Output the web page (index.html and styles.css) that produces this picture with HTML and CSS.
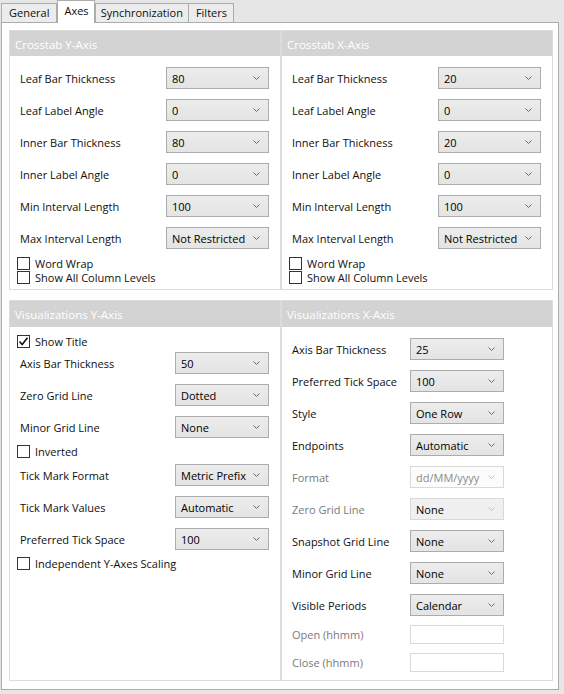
FILE: index.html
```html
<!DOCTYPE html>
<html>
<head>
<meta charset="utf-8">
<link rel="stylesheet" href="styles.css">
</head>
<body>
<div class="window">
  <div class="tabs">
    <div class="tab">General</div>
    <div class="tab active">Axes</div>
    <div class="tab">Synchronization</div>
    <div class="tab">Filters</div>
  </div>
  <div class="panel">
    <div class="groups">
      <section class="group g-top">
        <div class="group-head">Crosstab Y-Axis</div>
        <div class="group-body">
          <div class="field"><span class="lbl">Leaf Bar Thickness</span><div class="combo"><span>80</span><svg class="chev" width="7" height="4" viewBox="0 0 7 4"><polyline points="0.5,0.5 3.5,3.5 6.5,0.5"/></svg></div></div>
          <div class="field"><span class="lbl">Leaf Label Angle</span><div class="combo"><span>0</span><svg class="chev" width="7" height="4" viewBox="0 0 7 4"><polyline points="0.5,0.5 3.5,3.5 6.5,0.5"/></svg></div></div>
          <div class="field"><span class="lbl">Inner Bar Thickness</span><div class="combo"><span>80</span><svg class="chev" width="7" height="4" viewBox="0 0 7 4"><polyline points="0.5,0.5 3.5,3.5 6.5,0.5"/></svg></div></div>
          <div class="field"><span class="lbl">Inner Label Angle</span><div class="combo"><span>0</span><svg class="chev" width="7" height="4" viewBox="0 0 7 4"><polyline points="0.5,0.5 3.5,3.5 6.5,0.5"/></svg></div></div>
          <div class="field"><span class="lbl">Min Interval Length</span><div class="combo"><span>100</span><svg class="chev" width="7" height="4" viewBox="0 0 7 4"><polyline points="0.5,0.5 3.5,3.5 6.5,0.5"/></svg></div></div>
          <div class="field"><span class="lbl">Max Interval Length</span><div class="combo"><span>Not Restricted</span><svg class="chev" width="7" height="4" viewBox="0 0 7 4"><polyline points="0.5,0.5 3.5,3.5 6.5,0.5"/></svg></div></div>
          <div class="check"><span class="box"></span><span>Word Wrap</span></div>
          <div class="check"><span class="box"></span><span>Show All Column Levels</span></div>
        </div>
      </section>
      <section class="group g-top">
        <div class="group-head">Crosstab X-Axis</div>
        <div class="group-body">
          <div class="field"><span class="lbl">Leaf Bar Thickness</span><div class="combo"><span>20</span><svg class="chev" width="7" height="4" viewBox="0 0 7 4"><polyline points="0.5,0.5 3.5,3.5 6.5,0.5"/></svg></div></div>
          <div class="field"><span class="lbl">Leaf Label Angle</span><div class="combo"><span>0</span><svg class="chev" width="7" height="4" viewBox="0 0 7 4"><polyline points="0.5,0.5 3.5,3.5 6.5,0.5"/></svg></div></div>
          <div class="field"><span class="lbl">Inner Bar Thickness</span><div class="combo"><span>20</span><svg class="chev" width="7" height="4" viewBox="0 0 7 4"><polyline points="0.5,0.5 3.5,3.5 6.5,0.5"/></svg></div></div>
          <div class="field"><span class="lbl">Inner Label Angle</span><div class="combo"><span>0</span><svg class="chev" width="7" height="4" viewBox="0 0 7 4"><polyline points="0.5,0.5 3.5,3.5 6.5,0.5"/></svg></div></div>
          <div class="field"><span class="lbl">Min Interval Length</span><div class="combo"><span>100</span><svg class="chev" width="7" height="4" viewBox="0 0 7 4"><polyline points="0.5,0.5 3.5,3.5 6.5,0.5"/></svg></div></div>
          <div class="field"><span class="lbl">Max Interval Length</span><div class="combo"><span>Not Restricted</span><svg class="chev" width="7" height="4" viewBox="0 0 7 4"><polyline points="0.5,0.5 3.5,3.5 6.5,0.5"/></svg></div></div>
          <div class="check"><span class="box"></span><span>Word Wrap</span></div>
          <div class="check"><span class="box"></span><span>Show All Column Levels</span></div>
        </div>
      </section>
      <section class="group g-bl">
        <div class="group-head">Visualizations Y-Axis</div>
        <div class="group-body">
          <div class="check lead"><span class="box"><svg width="11" height="11" viewBox="0 0 11 11"><polyline points="1.5,5.5 4.2,8.5 9.5,1.8"/></svg></span><span>Show Title</span></div>
          <div class="field"><span class="lbl">Axis Bar Thickness</span><div class="combo"><span>50</span><svg class="chev" width="7" height="4" viewBox="0 0 7 4"><polyline points="0.5,0.5 3.5,3.5 6.5,0.5"/></svg></div></div>
          <div class="field"><span class="lbl">Zero Grid Line</span><div class="combo"><span>Dotted</span><svg class="chev" width="7" height="4" viewBox="0 0 7 4"><polyline points="0.5,0.5 3.5,3.5 6.5,0.5"/></svg></div></div>
          <div class="field"><span class="lbl">Minor Grid Line</span><div class="combo"><span>None</span><svg class="chev" width="7" height="4" viewBox="0 0 7 4"><polyline points="0.5,0.5 3.5,3.5 6.5,0.5"/></svg></div></div>
          <div class="check"><span class="box"></span><span>Inverted</span></div>
          <div class="field"><span class="lbl">Tick Mark Format</span><div class="combo"><span>Metric Prefix</span><svg class="chev" width="7" height="4" viewBox="0 0 7 4"><polyline points="0.5,0.5 3.5,3.5 6.5,0.5"/></svg></div></div>
          <div class="field"><span class="lbl">Tick Mark Values</span><div class="combo"><span>Automatic</span><svg class="chev" width="7" height="4" viewBox="0 0 7 4"><polyline points="0.5,0.5 3.5,3.5 6.5,0.5"/></svg></div></div>
          <div class="field"><span class="lbl">Preferred Tick Space</span><div class="combo"><span>100</span><svg class="chev" width="7" height="4" viewBox="0 0 7 4"><polyline points="0.5,0.5 3.5,3.5 6.5,0.5"/></svg></div></div>
          <div class="check"><span class="box"></span><span>Independent Y-Axes Scaling</span></div>
        </div>
      </section>
      <section class="group g-br">
        <div class="group-head">Visualizations X-Axis</div>
        <div class="group-body">
          <div class="field"><span class="lbl">Axis Bar Thickness</span><div class="combo"><span>25</span><svg class="chev" width="7" height="4" viewBox="0 0 7 4"><polyline points="0.5,0.5 3.5,3.5 6.5,0.5"/></svg></div></div>
          <div class="field"><span class="lbl">Preferred Tick Space</span><div class="combo"><span>100</span><svg class="chev" width="7" height="4" viewBox="0 0 7 4"><polyline points="0.5,0.5 3.5,3.5 6.5,0.5"/></svg></div></div>
          <div class="field"><span class="lbl">Style</span><div class="combo"><span>One Row</span><svg class="chev" width="7" height="4" viewBox="0 0 7 4"><polyline points="0.5,0.5 3.5,3.5 6.5,0.5"/></svg></div></div>
          <div class="field"><span class="lbl">Endpoints</span><div class="combo"><span>Automatic</span><svg class="chev" width="7" height="4" viewBox="0 0 7 4"><polyline points="0.5,0.5 3.5,3.5 6.5,0.5"/></svg></div></div>
          <div class="field disabled"><span class="lbl">Format</span><div class="combo off"><span>dd/MM/yyyy</span><svg class="chev" width="7" height="4" viewBox="0 0 7 4"><polyline points="0.5,0.5 3.5,3.5 6.5,0.5"/></svg></div></div>
          <div class="field disabled"><span class="lbl">Zero Grid Line</span><div class="combo off dark"><span>None</span><svg class="chev" width="7" height="4" viewBox="0 0 7 4"><polyline points="0.5,0.5 3.5,3.5 6.5,0.5"/></svg></div></div>
          <div class="field"><span class="lbl">Snapshot Grid Line</span><div class="combo"><span>None</span><svg class="chev" width="7" height="4" viewBox="0 0 7 4"><polyline points="0.5,0.5 3.5,3.5 6.5,0.5"/></svg></div></div>
          <div class="field"><span class="lbl">Minor Grid Line</span><div class="combo"><span>None</span><svg class="chev" width="7" height="4" viewBox="0 0 7 4"><polyline points="0.5,0.5 3.5,3.5 6.5,0.5"/></svg></div></div>
          <div class="field"><span class="lbl">Visible Periods</span><div class="combo"><span>Calendar</span><svg class="chev" width="7" height="4" viewBox="0 0 7 4"><polyline points="0.5,0.5 3.5,3.5 6.5,0.5"/></svg></div></div>
          <div class="entry disabled"><span class="lbl">Open (hhmm)</span><div class="textbox"></div></div>
          <div class="entry disabled"><span class="lbl">Close (hhmm)</span><div class="textbox"></div></div>
        </div>
      </section>
    </div>
  </div>
</div>
</body>
</html>
```

FILE: styles.css
```css
html, body {
  margin: 0;
  padding: 0;
}
body {
  background: #e6e6e6;
  font-family: "Open Sans", "Noto Sans", "Liberation Sans", sans-serif;
  font-size: 11px;
  color: #0f0f0f;
}
.window {
  width: 564px;
  height: 694px;
}
.tabs {
  display: flex;
  align-items: flex-end;
  height: 22px;
  padding-left: 1px;
  position: relative;
  z-index: 1;
}
.tab {
  box-sizing: border-box;
  height: 19px;
  line-height: 18px;
  padding: 0 6px 0 7px;
  border: 1px solid #acacac;
  border-bottom: none;
  background: #ececec;
  white-space: nowrap;
}
.tab:first-child {
  padding: 0 7px 0 7px;
}
.tab + .tab {
  border-left: none;
}
.tab.active {
  height: 23px;
  margin-bottom: -1px;
  line-height: 20px;
  background: #fff;
  padding: 0 5px 0 6px;
  border-left: 1px solid #acacac;
}
.tab.active + .tab {
  border-left: 1px solid #acacac;
  padding: 0 5px 0 5px;
}
.panel {
  box-sizing: border-box;
  margin-left: 1px;
  width: 558px;
  height: 668px;
  border: 1px solid #acacac;
  background: #fff;
  padding: 7px 4px 0 7px;
}
.groups {
  display: grid;
  grid-template-columns: 272px 272px;
  grid-template-rows: 260px 381px;
  row-gap: 10px;
}
.group {
  box-sizing: border-box;
  border: 1px solid #dcdcdc;
  display: flex;
  flex-direction: column;
}
.group-head {
  height: 25px;
  box-sizing: border-box;
  padding: 6px 0 0 5px;
  line-height: 16px;
  font-size: 11.5px;
  background: #d3d3d3;
  color: #fff;
  white-space: nowrap;
}
.g-bl .group-head,
.g-br .group-head {
  height: 26px;
  padding-top: 6px;
}
.group-body {
  display: flex;
  flex-direction: column;
  padding: 11px 10px 0 10px;
}
.g-bl .group-body {
  padding-top: 7px;
}
.field,
.entry {
  display: flex;
  align-items: center;
  white-space: nowrap;
}
.field {
  height: 22px;
}
.entry {
  height: 19px;
}
.lbl {
  flex: none;
}
.g-top .lbl { width: 146px; }
.g-bl .lbl { width: 155px; }
.g-br .lbl { width: 118px; }
.field + .field { margin-top: 10px; }
.field + .check { margin-top: 6px; }
.check + .field { margin-top: 6px; }
.g-top .field + .check { margin-top: 7px; }
.check.lead + .field { margin-top: 4px; }
.field + .entry,
.entry + .entry { margin-top: 9px; }

.combo {
  box-sizing: border-box;
  height: 22px;
  width: 103px;
  border: 1px solid #acacac;
  background: linear-gradient(#ececec, #e4e4e4);
  display: flex;
  align-items: center;
  justify-content: space-between;
  padding-left: 5px;
  color: #000;
}
.g-bl .combo,
.g-br .combo {
  width: 94px;
}
.chev {
  margin-right: 8px;
  fill: none;
  stroke: #6a6a6a;
  stroke-width: 1;
}
.combo.off {
  background: #fcfcfc;
  border-color: #d9d9d9;
  color: #8a8a8a;
}
.combo.off.dark {
  background: #f0f0f0;
  color: #000;
}
.combo.off .chev {
  stroke: #c2c2c2;
}
.disabled .lbl {
  color: #7a7a7a;
}
.textbox {
  box-sizing: border-box;
  width: 94px;
  height: 19px;
  border: 1px solid #d9d9d9;
  background: #fff;
}
.check {
  display: flex;
  align-items: center;
  height: 14px;
  margin-left: -3px;
  gap: 5px;
  white-space: nowrap;
}
.box {
  box-sizing: border-box;
  width: 13px;
  height: 13px;
  border: 1px solid #333;
  background: #fff;
  display: flex;
  align-items: center;
  justify-content: center;
}
.box svg {
  fill: none;
  stroke: #111;
  stroke-width: 1.6;
}
```
